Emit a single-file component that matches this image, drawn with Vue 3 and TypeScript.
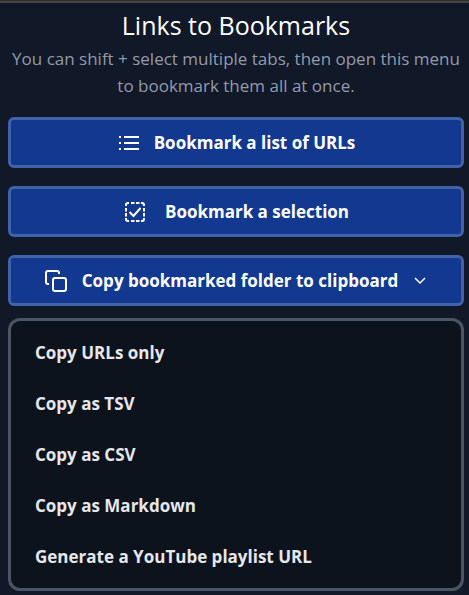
<script setup lang="ts">
import { ref } from 'vue'

const menuOpen = ref(true)
const copyOptions: string[] = [
  'Copy URLs only',
  'Copy as TSV',
  'Copy as CSV',
  'Copy as Markdown',
  'Generate a YouTube playlist URL',
]
</script>

<template>
  <main class="popup">
    <header class="intro">
      <h1>Links to Bookmarks</h1>
      <p>You can shift + select multiple tabs, then open this menu to bookmark them all at once.</p>
    </header>
    <div class="actions">
      <button type="button" class="action">
        <svg class="icon" viewBox="0 0 24 24" aria-hidden="true">
          <path d="M2 6h2M2 12h2M2 18h2M7 6h15M7 12h15M7 18h15" />
        </svg>
        <span>Bookmark a list of URLs</span>
      </button>
      <button type="button" class="action wide">
        <svg class="icon" viewBox="0 0 24 24" aria-hidden="true">
          <path d="M3 6V5a2 2 0 0 1 2-2h1M8 3h3.500M13 3h3.500M18 3h1a2 2 0 0 1 2 2v1M21 8v3.500M21 13v3.500M21 18v1a2 2 0 0 1-2 2h-1M16.500 21H13M11.500 21H8M6 21H5a2 2 0 0 1-2-2v-1M3 16.500V13M3 11.500V8" />
          <path d="m6.500 12 4 4 7-8" />
        </svg>
        <span>Bookmark a selection</span>
      </button>
      <button type="button" class="action copy" :aria-expanded="menuOpen" @click="menuOpen = !menuOpen">
        <svg class="icon" viewBox="0 0 24 24" aria-hidden="true">
          <rect x="9" y="9" width="13" height="13" rx="2" />
          <path d="M5 15H4a2 2 0 0 1-2-2V4a2 2 0 0 1 2-2h9a2 2 0 0 1 2 2v1" />
        </svg>
        <span>Copy bookmarked folder to clipboard</span>
        <svg class="chevron" viewBox="0 0 16 16" aria-hidden="true">
          <path d="m3 5 5 5 5-5" />
        </svg>
      </button>
    </div>
    <ul v-if="menuOpen" class="menu">
      <li v-for="option in copyOptions" :key="option">
        <button type="button">{{ option }}</button>
      </li>
    </ul>
  </main>
</template>

<style>
body {
  background: #111827;
}
</style>

<style scoped>
.popup {
  box-sizing: border-box;
  min-height: 100vh;
  padding: 7px 5px 4px 8px;
  background: linear-gradient(#303030 1px, #454545 1px, #454545 3px, #111827 3px);
  color: #fff;
  font-family: "Segoe UI", "Open Sans", "Noto Sans", sans-serif;
}

.intro {
  text-align: center;
}

h1 {
  margin: 0;
  font-size: 25px;
  font-weight: 400;
  line-height: 36px;
}

p {
  margin: 0;
  padding-top: 2px;
  color: #919bab;
  font-size: 17px;
  line-height: 27px;
}

.actions {
  display: grid;
  gap: 18px;
  margin: 18px 0 12px;
}

button {
  font-family: inherit;
  font-size: 17px;
  font-weight: 700;
  line-height: 27px;
  cursor: pointer;
}

.action {
  display: flex;
  align-items: center;
  justify-content: center;
  gap: 13px;
  padding: 9px;
  border: 3px solid #4161a8;
  border-radius: 6px;
  background: #12388f;
  color: #fff;
}

.wide {
  gap: 18px;
}

.icon {
  flex: none;
  width: 24px;
  height: 24px;
}

.chevron {
  flex: none;
  width: 16px;
  height: 16px;
}

svg {
  fill: none;
  stroke: currentColor;
  stroke-width: 2;
}

.copy {
  gap: 14px;
  stroke-linejoin: round;
}

svg.chevron {
  stroke-width: 1.5;
}

.menu {
  margin: 0;
  padding: 6px 0;
  border: 3px solid #4b5563;
  border-radius: 12px;
  background: #0d131d;
  list-style: none;
}

.menu button {
  display: block;
  width: 100%;
  padding: 12px 24px;
  border: 0;
  background: none;
  color: #e5e7eb;
  text-align: left;
}
</style>
